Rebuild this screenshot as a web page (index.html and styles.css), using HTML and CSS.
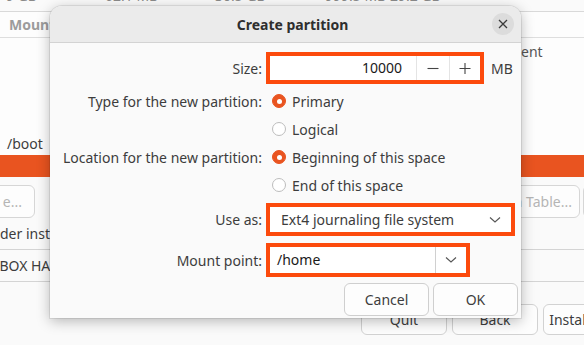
FILE: index.html
```html
<!DOCTYPE html>
<html lang="en">
<head>
  <meta charset="UTF-8">
  <title>Create partition</title>
  <link rel="stylesheet" href="styles.css">
</head>
<body>
  <!-- Installer window behind the dialog -->
  <div class="app">
    <div class="top-strip">
      <span class="cell c1">9 GB</span>
      <span class="cell c2">62.1 MB</span>
      <span class="cell c3">30.5 GB</span>
      <span class="cell c4">999.5 MB</span>
      <span class="cell c5">29.2 GB</span>
    </div>
    <div class="col-header"><span>Mount point</span></div>
    <div class="list">
      <div class="list-row"><span class="ent">ent</span></div>
      <div class="list-row">/boot</div>
    </div>
    <div class="selected-row"></div>
    <div class="tool-row">
      <div class="tool-btn left">e...</div>
      <div class="tool-btn right">New Partition Table...</div>
      <div class="tool-btn edge">Revert</div>
    </div>
    <div class="boot-label">der installation:</div>
    <div class="combo-row">VBOX HARDDISK</div>
    <div class="nav-row">
      <div class="nav-btn">Quit</div>
      <div class="nav-btn">Back</div>
      <div class="nav-btn">Install Now</div>
    </div>
  </div>

  <!-- Create partition dialog -->
  <div class="dialog">
    <div class="dialog-header">
      <span class="dialog-title">Create partition</span>
      <span class="close-btn">
        <svg width="10" height="10" viewBox="0 0 10 10"><path d="M1 1 L9 9 M9 1 L1 9" stroke="#3a3a3a" stroke-width="1.3" fill="none"/></svg>
      </span>
    </div>
    <div class="dialog-body">
      <div class="form-row size-row">
        <div class="label">Size:</div>
        <div class="spin mark">
          <div class="spin-value">10000</div>
          <div class="spin-btn">
            <svg width="12" height="12" viewBox="0 0 12 12"><path d="M0.5 6.5 H11.5" stroke="#444" stroke-width="1.1"/></svg>
          </div>
          <div class="spin-btn">
            <svg width="12" height="12" viewBox="0 0 12 12"><path d="M0.5 6.5 H11.5 M6 1 V12" stroke="#444" stroke-width="1.1"/></svg>
          </div>
        </div>
        <div class="unit">MB</div>
      </div>

      <div class="form-row radio-row">
        <div class="label">Type for the new partition:</div>
        <div class="radio checked"></div>
        <div class="radio-text">Primary</div>
      </div>
      <div class="form-row radio-row">
        <div class="label"></div>
        <div class="radio"></div>
        <div class="radio-text">Logical</div>
      </div>
      <div class="form-row radio-row">
        <div class="label">Location for the new partition:</div>
        <div class="radio checked"></div>
        <div class="radio-text">Beginning of this space</div>
      </div>
      <div class="form-row radio-row">
        <div class="label"></div>
        <div class="radio"></div>
        <div class="radio-text">End of this space</div>
      </div>

      <div class="form-row use-row">
        <div class="label">Use as:</div>
        <div class="select mark">
          <span class="select-text">Ext4 journaling file system</span>
          <svg class="chev" width="12" height="8" viewBox="0 0 12 8"><path d="M1 1.5 L6 6 L11 1.5" stroke="#555" stroke-width="1.1" fill="none"/></svg>
        </div>
      </div>

      <div class="form-row mount-row">
        <div class="label">Mount point:</div>
        <div class="combo mark">
          <span class="combo-text">/home</span>
          <span class="combo-btn">
            <svg width="12" height="8" viewBox="0 0 12 8"><path d="M1 1.5 L6 6 L11 1.5" stroke="#555" stroke-width="1.1" fill="none"/></svg>
          </span>
        </div>
      </div>

      <div class="actions">
        <div class="btn cancel">Cancel</div>
        <div class="btn ok">OK</div>
      </div>
    </div>
  </div>
</body>
</html>
```

FILE: styles.css
```css
* {
  box-sizing: border-box;
}

body {
  margin: 0;
  width: 584px;
  height: 345px;
  overflow: hidden;
  background-color: #fafafa;
  font-family: 'Noto Sans', sans-serif;
  font-size: 14px;
  color: #3d3d3d;
  position: relative;
}

/* Background installer window */
.app {
  display: flex;
  flex-direction: column;
  width: 584px;
}

.top-strip {
  height: 12px;
  border-bottom: 1px solid #d9d9d9;
  overflow: hidden;
  position: relative;
  color: #8a8a8a;
  white-space: nowrap;
}

.top-strip .cell {
  position: absolute;
  top: -13px;
  line-height: 18px;
}

.c1 { left: 6px; }
.c2 { left: 105px; }
.c3 { left: 215px; }
.c4 { left: 325px; }
.c5 { left: 390px; }

.col-header {
  height: 26px;
  border-bottom: 1px solid #dedede;
  background-color: #fdfdfd;
  padding-left: 9px;
  font-weight: bold;
  color: #9c9c9c;
  line-height: 25px;
  white-space: nowrap;
}

.list {
  height: 117px;
  padding-top: 3px;
  display: flex;
  flex-direction: column;
  justify-content: space-between;
  background-color: #fdfdfd;
}

.list-row {
  height: 22px;
  line-height: 22px;
  padding-left: 7px;
  white-space: nowrap;
}

.ent {
  margin-left: 514px;
  color: #555;
}

.selected-row {
  height: 22px;
  background-color: #e95420;
}

.tool-row {
  height: 33px;
  margin-top: 8px;
  position: relative;
}

.tool-btn {
  position: absolute;
  top: 0;
  height: 33px;
  border: 1px solid #d6d6d6;
  border-radius: 6px;
  background-color: #fdfdfd;
  color: #b5b5b5;
  line-height: 31px;
  padding: 0 12px;
  white-space: nowrap;
}

.tool-btn.left { left: -10px; width: 45px; text-align: right; padding: 0 12px 0 0; }
.tool-btn.right { left: 420px; width: 160px; text-align: right; padding-right: 16px; }
.tool-btn.edge { left: 583px; }

.boot-label {
  height: 31px;
  line-height: 31px;
  white-space: nowrap;
}

.combo-row {
  height: 33px;
  border-top: 1px solid #d4d4d4;
  border-bottom: 1px solid #d4d4d4;
  line-height: 31px;
  margin-left: -9px;
  white-space: nowrap;
}

.nav-row {
  display: flex;
  gap: 5px;
  margin-top: 22px;
  padding-left: 361px;
}

.nav-btn {
  flex: 0 0 86px;
  height: 31px;
  border: 1px solid #d2d2d2;
  border-radius: 6px;
  background-color: #fdfdfd;
  text-align: center;
  line-height: 29px;
  white-space: nowrap;
}

/* Dialog */
.dialog {
  position: absolute;
  left: 50px;
  top: 6px;
  width: 471px;
  height: 312px;
  background-color: #fafafa;
  border-radius: 12px 12px 0 0;
  box-shadow: 0 3px 14px rgba(0, 0, 0, 0.28), 0 0 0 1px rgba(0, 0, 0, 0.08);
  display: flex;
  flex-direction: column;
}

.dialog-header {
  height: 37px;
  background-color: #ebebeb;
  border-bottom: 1px solid #d3d3d3;
  border-radius: 12px 12px 0 0;
  display: flex;
  align-items: center;
  justify-content: center;
  padding-left: 14px;
  position: relative;
}

.dialog-title {
  font-weight: bold;
  font-size: 14px;
  color: #2e2e2e;
}

.close-btn {
  position: absolute;
  right: 7px;
  top: 7px;
  width: 22px;
  height: 22px;
  border-radius: 50%;
  background-color: #dcdcdc;
  display: flex;
  align-items: center;
  justify-content: center;
}

.dialog-body {
  flex: 1;
  display: flex;
  flex-direction: column;
}

.form-row {
  display: flex;
  align-items: center;
}

.label {
  flex: 0 0 212px;
  text-align: right;
  white-space: nowrap;
}

/* orange annotation frames */
.mark {
  border: 4px solid #fc4a0c;
}

.size-row {
  margin-top: 9px;
  height: 32px;
}

.spin {
  margin-left: 4px;
  width: 218px;
  height: 32px;
  background-color: #fff;
  display: flex;
}

.spin-value {
  flex: 1;
  text-align: right;
  padding-right: 14px;
  line-height: 24px;
  color: #1a1a1a;
}

.spin-btn {
  flex: 0 0 33px;
  border-left: 1px solid #e4e4e4;
  display: flex;
  align-items: center;
  justify-content: center;
}

.spin-btn:last-child {
  flex-basis: 31px;
}

.unit {
  margin-left: 7px;
}

.radio-row {
  height: 28px;
}

.size-row + .radio-row {
  margin-top: 3px;
}

.radio {
  margin-left: 10px;
  width: 14px;
  height: 14px;
  border-radius: 50%;
  border: 1px solid #bdbdbd;
  background-color: #fff;
  position: relative;
}

.radio.checked {
  border-color: #e95420;
  background-color: #e95420;
}

.radio.checked::after {
  content: '';
  position: absolute;
  left: 3.5px;
  top: 3.5px;
  width: 5px;
  height: 5px;
  border-radius: 50%;
  background-color: #fff;
}

.radio-text {
  margin-left: 6px;
  white-space: nowrap;
}

.use-row {
  margin-top: 4px;
  height: 33px;
}

.select {
  margin-left: 4px;
  width: 249px;
  height: 33px;
  background-color: #fff;
  display: flex;
  align-items: center;
  padding-left: 11px;
  padding-right: 10px;
}

.select-text {
  flex: 1;
  white-space: nowrap;
}

.mount-row {
  margin-top: 7px;
  height: 34px;
}

.combo {
  margin-left: 4px;
  width: 204px;
  height: 34px;
  background-color: #fff;
  display: flex;
}

.combo-text {
  flex: 1;
  padding-left: 7px;
  line-height: 26px;
  color: #1a1a1a;
}

.combo-btn {
  flex: 0 0 31px;
  border-left: 1px solid #d0d0d0;
  display: flex;
  align-items: center;
  justify-content: center;
}

.actions {
  display: flex;
  justify-content: flex-end;
  gap: 4px;
  margin-top: 6px;
  padding-right: 3px;
}

.btn {
  width: 85px;
  height: 33px;
  border: 1px solid #cfcfcf;
  border-radius: 6px;
  background-color: #fdfdfd;
  text-align: center;
  line-height: 31px;
}
```
